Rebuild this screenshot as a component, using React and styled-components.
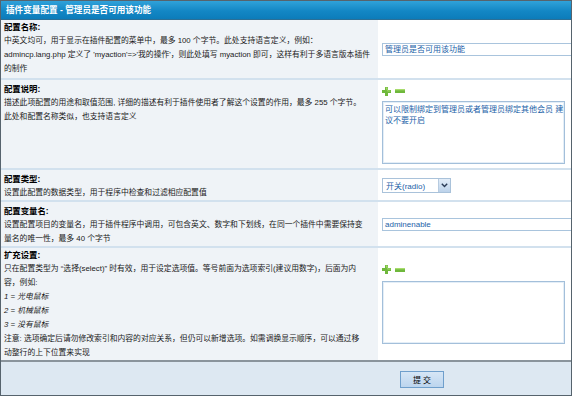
import React from "react";
import styled, { createGlobalStyle } from "styled-components";

const Global = createGlobalStyle`
  html, body { margin: 0; padding: 0; background: #ffffff; }
  body { font-family: "Liberation Sans", "Noto Sans CJK SC", sans-serif; font-size: 7.8px; color: #1a1a1a; }
  * { box-sizing: border-box; }
`;

const Frame = styled.div`
  width: 572px;
  height: 396px;
  border: 1px solid #56636d;
  display: flex;
  flex-direction: column;
  overflow: hidden;
  background: #fff;
`;

const Header = styled.div`
  height: 19px;
  flex: none;
  background: linear-gradient(#30a2da, #1387c5 55%, #0c7cba);
  border-bottom: 1px solid #2b6f96;
  color: #fff;
  font-weight: bold;
  font-size: 8.6px;
  line-height: 18px;
  padding-left: 5px;
  white-space: nowrap;
  overflow: hidden;
`;

const Row = styled.div`
  display: grid;
  grid-template-columns: 377px 1fr;
  border-bottom: ${(p) => (p.$last ? "0" : "2px solid #d2e1ee")};
  flex: none;
`;

const Info = styled.div`
  background: #eff3f7;
  padding: ${(p) => p.$pad || "2px 3px 1px"};
`;

const Title = styled.div`
  height: 14px;
  line-height: 14px;
  font-weight: bold;
  font-size: 8.4px;
  color: #000;
  white-space: nowrap;
`;

const Line = styled.div`
  height: 14px;
  line-height: 14px;
  white-space: nowrap;
  font-style: ${(p) => (p.$italic ? "italic" : "normal")};
`;

const Control = styled.div`
  display: flex;
  flex-direction: column;
  justify-content: center;
  padding: ${(p) => p.$pad || "0 0 0 4px"};
  overflow: hidden;
  background: #fff;
`;

const TextInput = styled.div`
  width: 210px;
  height: 13px;
  border: 1px solid #a9c4dd;
  color: #1c62a8;
  font-size: 8px;
  line-height: 11px;
  padding-left: 2px;
  white-space: nowrap;
  flex: none;
`;

const Area = styled.div`
  width: 183px;
  height: 63px;
  border: 1px solid #a3bfda;
  box-shadow: inset 0 0 0 1px #e4eef7;
  color: #1c62a8;
  font-size: 8px;
  line-height: 11px;
  padding: 2px 0 2px 2px;
  word-break: break-all;
  flex: none;
`;

const Tools = styled.div`
  display: flex;
  align-items: center;
  gap: 4px;
  height: 10px;
  margin-bottom: ${(p) => p.$gap || "5px"};
`;

const Select = styled.div`
  width: 69px;
  height: 15px;
  border: 1px solid #a9c2da;
  display: flex;
  align-items: center;
  justify-content: space-between;
  color: #1c62a8;
  font-size: 8px;
  padding-left: 3px;
  flex: none;
`;

const Arrow = styled.div`
  width: 12px;
  height: 13px;
  background: linear-gradient(#e3edf8, #bcd2ea);
  border-left: 1px solid #b7cbe0;
  display: flex;
  align-items: center;
  justify-content: center;
`;

const Footer = styled.div`
  flex: 1;
  border-top: 2px solid #8a949c;
  background: #dde8f2;
  display: flex;
  align-items: center;
  padding: 0 0 0 399px;
`;

const Button = styled.button`
  width: 44px;
  height: 17px;
  margin-top: 1px;
  border: 1px solid #6f9fcc;
  background: linear-gradient(#d6e6f6, #bcd5ee);
  font-family: "Liberation Sans", "Noto Sans CJK SC", sans-serif;
  font-size: 8px;
  color: #000;
  padding: 0;
  cursor: pointer;
`;

const Plus = () => (
  <svg width="9" height="9" viewBox="0 0 9 9">
    <path d="M3 0h3v3h3v3H6v3H3V6H0V3h3z" fill="#6fb83c" />
    <path d="M3.5 0.5h2v3h3v1h-3" fill="#a8dc6e" />
  </svg>
);

const Minus = () => (
  <svg width="10" height="4" viewBox="0 0 10 4">
    <rect x="0" y="0" width="10" height="4" fill="#6fb83c" />
    <rect x="0" y="0" width="10" height="1.3" fill="#a8dc6e" />
  </svg>
);

const Chevron = () => (
  <svg width="7" height="5" viewBox="0 0 7 5">
    <path d="M0.8 0.8 L3.5 3.6 L6.2 0.8" fill="none" stroke="#2a3a55" strokeWidth="1.4" />
  </svg>
);

export default function App() {
  return (
    <>
      <Global />
      <Frame>
        <Header>插件变量配置 - 管理员是否可用该功能</Header>

        <Row>
          <Info $pad="0 3px 2px">
            <Title>配置名称:</Title>
            <Line>中英文均可，用于显示在插件配置的菜单中，最多 100 个字节。此处支持语言定义，例如：</Line>
            <Line>admincp.lang.php 定义了 'myaction'=&gt;'我的操作'，则此处填写 myaction 即可，这样有利于多语言版本插件</Line>
            <Line>的制作</Line>
          </Info>
          <Control>
            <TextInput>管理员是否可用该功能</TextInput>
          </Control>
        </Row>

        <Row>
          <Info>
            <Title>配置说明:</Title>
            <Line>描述此项配置的用途和取值范围, 详细的描述有利于插件使用者了解这个设置的作用，最多 255 个字节。</Line>
            <Line>此处和配置名称类似，也支持语言定义</Line>
          </Info>
          <Control $pad="6px 0 4px 4px">
            <Tools>
              <Plus />
              <Minus />
            </Tools>
            <Area>可以限制绑定到管理员或者管理员绑定其他会员 建议不要开启</Area>
          </Control>
        </Row>

        <Row>
          <Info $pad="2px 3px 0">
            <Title>配置类型:</Title>
            <Line>设置此配置的数据类型，用于程序中检查和过滤相应配置值</Line>
          </Info>
          <Control>
            <Select>
              <span>开关(radio)</span>
              <Arrow>
                <Chevron />
              </Arrow>
            </Select>
          </Control>
        </Row>

        <Row>
          <Info $pad="2px 3px 0">
            <Title>配置变量名:</Title>
            <Line>设置配置项目的变量名，用于插件程序中调用，可包含英文、数字和下划线，在同一个插件中需要保持变</Line>
            <Line>量名的唯一性，最多 40 个字节</Line>
          </Info>
          <Control>
            <TextInput>adminenable</TextInput>
          </Control>
        </Row>

        <Row $last>
          <Info $pad="0 3px 0">
            <Title>扩充设置:</Title>
            <Line>只在配置类型为 “选择(select)” 时有效，用于设定选项值。等号前面为选项索引(建议用数字)，后面为内</Line>
            <Line>容，例如:</Line>
            <Line $italic>1 = 光电鼠标</Line>
            <Line $italic>2 = 机械鼠标</Line>
            <Line $italic>3 = 没有鼠标</Line>
            <Line>注意: 选项确定后请勿修改索引和内容的对应关系，但仍可以新增选项。如需调换显示顺序，可以通过移</Line>
            <Line>动整行的上下位置来实现</Line>
          </Info>
          <Control>
            <Tools $gap="6px">
              <Plus />
              <Minus />
            </Tools>
            <Area />
          </Control>
        </Row>

        <Footer>
          <Button>提 交</Button>
        </Footer>
      </Frame>
    </>
  );
}
